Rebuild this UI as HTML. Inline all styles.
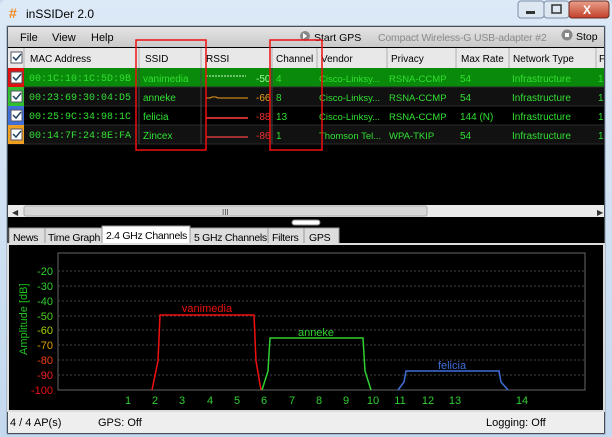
<!DOCTYPE html><html><head><style>body{margin:0;width:612px;height:437px;overflow:hidden;background:#c9dbef}svg{display:block}</style></head><body>
<svg width="612" height="437" viewBox="0 0 612 437" font-family="Liberation Sans, sans-serif" font-size="11">
<defs><linearGradient id="tb" x1="0" y1="0" x2="0" y2="1"><stop offset="0" stop-color="#dce9f7"/><stop offset="1" stop-color="#c4d8ee"/></linearGradient>
<linearGradient id="mb" x1="0" y1="0" x2="0" y2="1"><stop offset="0" stop-color="#e4e4e4"/><stop offset="1" stop-color="#c9c9c9"/></linearGradient>
<linearGradient id="cl" x1="0" y1="0" x2="0" y2="1"><stop offset="0" stop-color="#e8a08c"/><stop offset="1" stop-color="#c2402a"/></linearGradient></defs>
<rect width="612" height="437" fill="url(#tb)" rx="6"/>
<text x="9" y="18" fill="#f08a1c" font-weight="bold" font-size="14">#</text>
<text x="26" y="18" fill="#000" font-size="12">inSSIDer 2.0</text>
<rect x="518" y="1" width="26" height="17" rx="3" fill="#dde7f2" stroke="#7a8ea8"/><rect x="526" y="11" width="9" height="3" fill="#333"/>
<rect x="544" y="1" width="25" height="17" rx="3" fill="#dde7f2" stroke="#7a8ea8"/><rect x="552" y="5" width="9" height="8" fill="none" stroke="#333" stroke-width="1.5"/>
<rect x="569" y="1" width="40" height="17" rx="3" fill="url(#cl)" stroke="#6b2a20"/><text x="583" y="14" fill="#fff" font-weight="bold" font-size="12">X</text>
<rect x="7" y="26" width="598" height="408" fill="#000" stroke="#8a9bb0"/>
<rect x="8" y="27" width="596" height="20" fill="url(#mb)"/>
<text x="20" y="41" fill="#000">File</text><text x="52" y="41" fill="#000">View</text><text x="91" y="41" fill="#000">Help</text>
<circle cx="305" cy="36" r="5" fill="#888"/><path d="M303 33l4 3-4 3z" fill="#fff"/><text x="314" y="41" fill="#000" font-size="10.5">Start GPS</text>
<text x="378" y="41" fill="#8a8a8a" font-size="10.5" letter-spacing="-0.2">Compact Wireless-G USB-adapter #2</text>
<circle cx="567" cy="35" r="5.5" fill="#888"/><rect x="565" y="33" width="4" height="4" fill="#fff"/><text x="576" y="40" fill="#000" font-size="10.5">Stop</text>
<rect x="8" y="48" width="596" height="20" fill="#e8e8e8"/>
<g stroke="#b0b0b0"><line x1="24" y1="48" x2="24" y2="68"/><line x1="139" y1="48" x2="139" y2="68"/><line x1="201" y1="48" x2="201" y2="68"/><line x1="272" y1="48" x2="272" y2="68"/><line x1="317" y1="48" x2="317" y2="68"/><line x1="387" y1="48" x2="387" y2="68"/><line x1="456" y1="48" x2="456" y2="68"/><line x1="509" y1="48" x2="509" y2="68"/><line x1="596" y1="48" x2="596" y2="68"/></g>
<rect x="11" y="52" width="11" height="11" fill="#fff" stroke="#556"/><path d="M13 57l3 3 5-6" stroke="#246" fill="none" stroke-width="1.5"/>
<g fill="#000" font-size="10"><text x="30" y="62">MAC Address</text><text x="145" y="62">SSID</text><text x="206" y="62">RSSI</text><text x="276" y="62">Channel</text><text x="321" y="62">Vendor</text><text x="391" y="62">Privacy</text><text x="461" y="62">Max Rate</text><text x="513" y="62">Network Type</text><text x="599" y="62">F</text></g>
<rect x="8" y="68" width="596" height="19" fill="#0a8a0a"/>
<rect x="8" y="87" width="596" height="19" fill="#111"/><rect x="8" y="106" width="596" height="19" fill="#000"/><rect x="8" y="125" width="596" height="19" fill="#111"/>
<g stroke="#2a2a2a"><line x1="8" y1="87" x2="604" y2="87"/><line x1="8" y1="106" x2="604" y2="106"/><line x1="8" y1="125" x2="604" y2="125"/><line x1="8" y1="144" x2="604" y2="144"/></g>
<rect x="8" y="68" width="16" height="19" fill="#e01010"/><rect x="8" y="87" width="16" height="19" fill="#30c030"/><rect x="8" y="106" width="16" height="19" fill="#3f6fd8"/><rect x="8" y="125" width="16" height="19" fill="#f0a020"/>
<g fill="#fff" stroke="#556"><rect x="11" y="72" width="11" height="11"/><rect x="11" y="91" width="11" height="11"/><rect x="11" y="110" width="11" height="11"/><rect x="11" y="129" width="11" height="11"/></g>
<g stroke="#246" fill="none" stroke-width="1.5"><path d="M13 77l3 3 5-6"/><path d="M13 96l3 3 5-6"/><path d="M13 115l3 3 5-6"/><path d="M13 134l3 3 5-6"/></g>
<g font-family="Liberation Mono, monospace" font-size="10" fill="#30e030"><text x="29" y="81">00:1C:10:1C:5D:9B</text><text x="29" y="100">00:23:69:30:04:D5</text><text x="29" y="119">00:25:9C:34:98:1C</text><text x="29" y="138">00:14:7F:24:8E:FA</text></g>
<g fill="#30e030" font-size="10"><text x="143" y="82">vanimedia</text><text x="143" y="101">anneke</text><text x="143" y="120">felicia</text><text x="143" y="139">Zincex</text>
<text x="276" y="82">4</text><text x="276" y="101">8</text><text x="276" y="120">13</text><text x="276" y="139">1</text>
<g font-size="9.5"><text x="319" y="82">Cisco-Linksy...</text><text x="319" y="101">Cisco-Linksy...</text><text x="319" y="120">Cisco-Linksy...</text><text x="319" y="139">Thomson Tel...</text>
<text x="389" y="82">RSNA-CCMP</text><text x="389" y="101">RSNA-CCMP</text><text x="389" y="120">RSNA-CCMP</text><text x="389" y="139">WPA-TKIP</text></g>
<text x="460" y="82">54</text><text x="460" y="101">54</text><text x="460" y="120">144 (N)</text><text x="460" y="139">54</text>
<text x="512" y="82">Infrastructure</text><text x="512" y="101">Infrastructure</text><text x="512" y="120">Infrastructure</text><text x="512" y="139">Infrastructure</text>
<text x="598" y="82">1</text><text x="598" y="101">1</text><text x="598" y="120">1</text><text x="598" y="139">1</text></g>
<g font-size="10"><text x="256" y="82" fill="#9f9">-50</text><text x="256" y="101" fill="#f0a020">-66</text><text x="256" y="120" fill="#f03030">-88</text><text x="256" y="139" fill="#f03030">-86</text></g>
<path d="M206 76h40" stroke="#cfc" stroke-dasharray="2 1"/><path d="M206 98h4l2-1h4l2 1h30" stroke="#f0a020"/><path d="M206 118h42" stroke="#c03030" stroke-width="2"/><path d="M206 137h42" stroke="#a03030" stroke-width="2"/>
<g stroke="#444"><line x1="139" y1="68" x2="139" y2="144"/><line x1="201" y1="68" x2="201" y2="144"/><line x1="272" y1="68" x2="272" y2="144"/></g>
<g fill="none" stroke="#f01010" stroke-width="1.5"><rect x="136" y="40" width="70" height="110"/><rect x="270" y="40" width="52" height="110"/></g>
<rect x="8" y="205" width="596" height="12" fill="#eaeaea"/><rect x="24" y="206" width="403" height="10" rx="2" fill="#d8d8d8" stroke="#aaa"/><text x="222" y="215" font-size="8" fill="#444">III</text><text x="12" y="215" font-size="8" fill="#333">◀</text><text x="597" y="215" font-size="8" fill="#333">▶</text>
<rect x="292" y="220" width="28" height="5" rx="2.5" fill="#fff" stroke="#888"/>
<g font-size="10.5" fill="#000" letter-spacing="-0.3"><rect x="9" y="228" width="36" height="16" fill="#ddd" stroke="#999"/><text x="13" y="241">News</text>
<rect x="45" y="228" width="57" height="16" fill="#ddd" stroke="#999"/><text x="48" y="241">Time Graph</text>
<rect x="102" y="226" width="88" height="19" fill="#fff" stroke="#999"/><text x="106" y="239">2.4 GHz Channels</text>
<rect x="190" y="228" width="78" height="16" fill="#ddd" stroke="#999"/><text x="194" y="241">5 GHz Channels</text>
<rect x="268" y="228" width="36" height="16" fill="#ddd" stroke="#999"/><text x="272" y="241">Filters</text>
<rect x="304" y="228" width="35" height="16" fill="#ddd" stroke="#999"/><text x="309" y="241">GPS</text></g>
<rect x="8" y="244" width="596" height="167" fill="#000" stroke="#ddd" stroke-width="2"/>
<rect x="58" y="253" width="527" height="137" fill="none" stroke="#666"/>
<g stroke="#444" stroke-dasharray="2 2"><line x1="58" y1="271" x2="585" y2="271"/><line x1="58" y1="286" x2="585" y2="286"/><line x1="58" y1="301" x2="585" y2="301"/><line x1="58" y1="316" x2="585" y2="316"/><line x1="58" y1="330" x2="585" y2="330"/><line x1="58" y1="345" x2="585" y2="345"/><line x1="58" y1="360" x2="585" y2="360"/><line x1="58" y1="375" x2="585" y2="375"/></g>
<g font-size="11" text-anchor="end"><text x="53" y="275" fill="#30d030">-20</text><text x="53" y="290" fill="#30d030">-30</text><text x="53" y="305" fill="#30d030">-40</text><text x="53" y="320" fill="#50d020">-50</text><text x="53" y="334" fill="#a0d000">-60</text><text x="53" y="349" fill="#e0a000">-70</text><text x="53" y="364" fill="#f04010">-80</text><text x="53" y="379" fill="#f02020">-90</text><text x="53" y="394" fill="#f01010">-100</text></g>
<text transform="translate(27,355) rotate(-90)" fill="#20c020" font-size="11">Amplitude [dB]</text>
<g fill="#30d030" font-size="11" text-anchor="middle"><text x="128" y="404">1</text><text x="155" y="404">2</text><text x="182" y="404">3</text><text x="210" y="404">4</text><text x="237" y="404">5</text><text x="264" y="404">6</text><text x="292" y="404">7</text><text x="319" y="404">8</text><text x="346" y="404">9</text><text x="373" y="404">10</text><text x="400" y="404">11</text><text x="428" y="404">12</text><text x="455" y="404">13</text><text x="522" y="404">14</text></g>
<path d="M152 390L158 361L160 315H254L256 361L261 390" fill="none" stroke="#f01010" stroke-width="1.5"/>
<path d="M262 390L268 371L270 338H363L365 371L371 390" fill="none" stroke="#30d030" stroke-width="1.5"/>
<path d="M398 390L404 382L406 371H499L501 382L508 390" fill="none" stroke="#3f6fd8" stroke-width="1.5"/>
<text x="207" y="312" fill="#f01010" text-anchor="middle">vanimedia</text><text x="316" y="336" fill="#30d030" text-anchor="middle">anneke</text><text x="452" y="369" fill="#3f6fd8" text-anchor="middle">felicia</text>
<rect x="8" y="412" width="596" height="21" fill="#eee"/>
<g fill="#000"><text x="10" y="426">4 / 4 AP(s)</text><text x="98" y="426">GPS: Off</text><text x="486" y="426">Logging: Off</text></g>
</svg></body></html>
